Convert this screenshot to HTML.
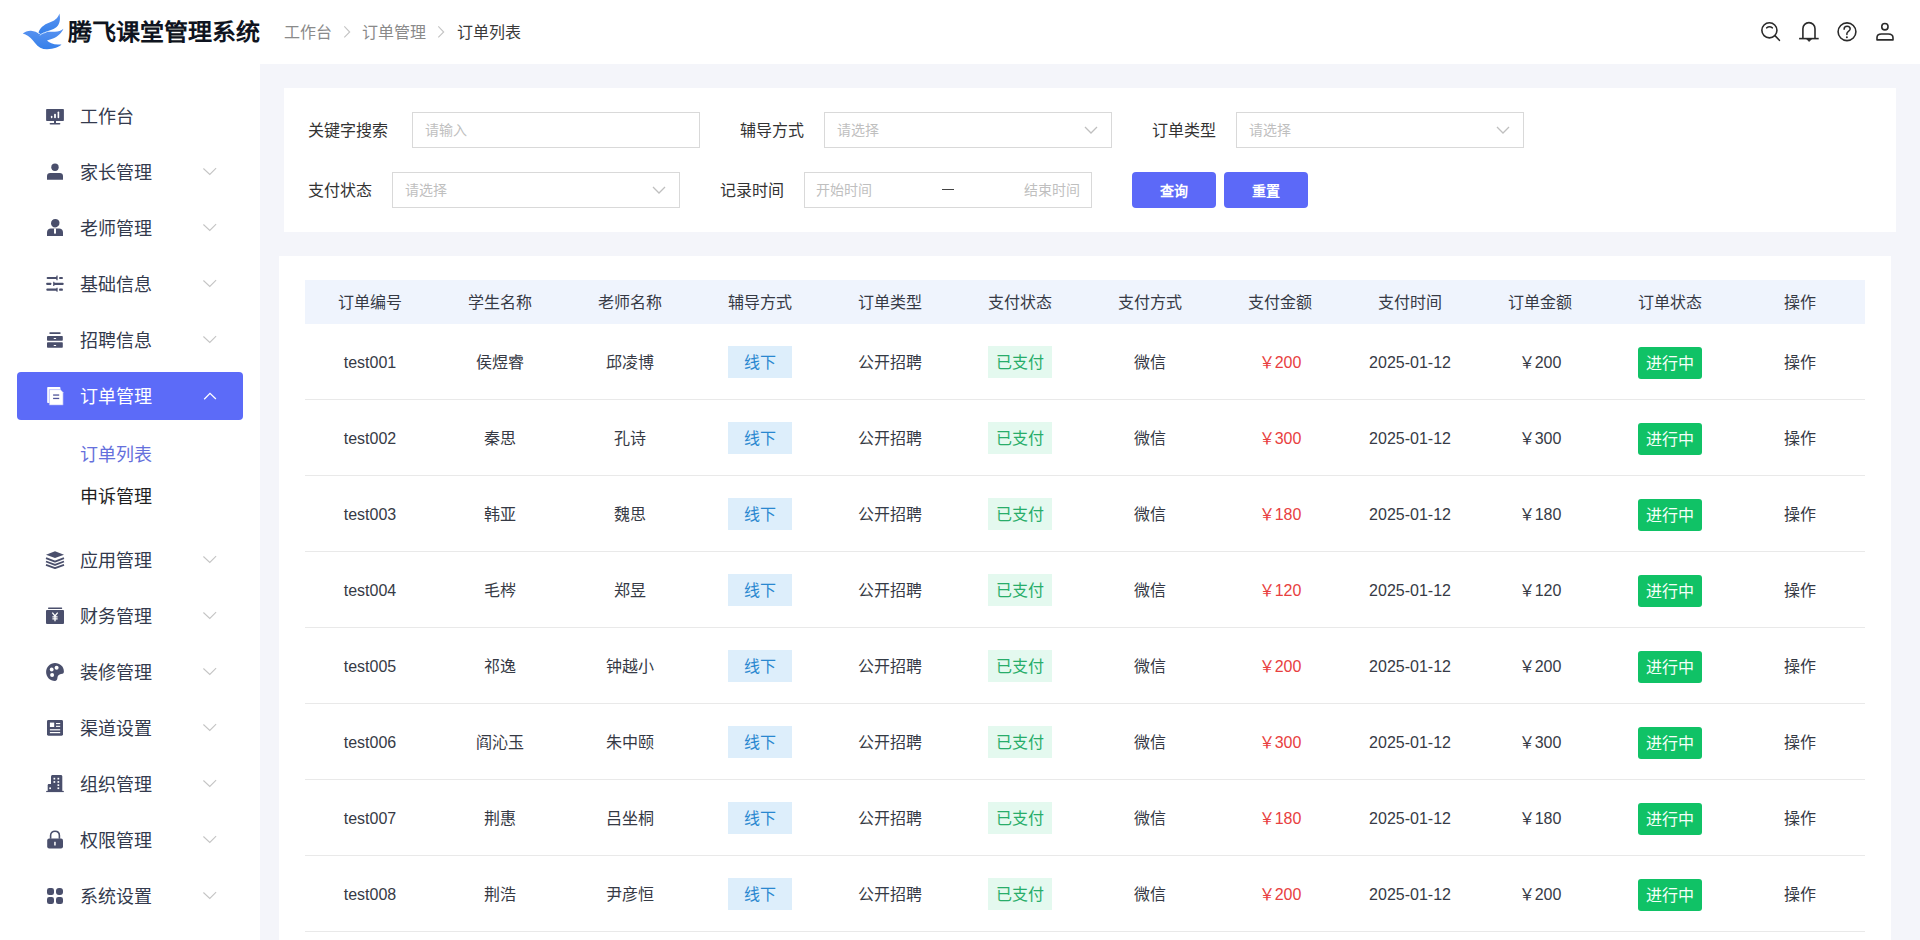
<!DOCTYPE html>
<html lang="zh-CN">
<head>
<meta charset="utf-8">
<style>
*{box-sizing:border-box;margin:0;padding:0}
html,body{width:1920px;height:940px;overflow:hidden;background:#f4f5fa;font-family:"Liberation Sans",sans-serif;color:#333}
.header{position:absolute;left:0;top:0;width:1920px;height:64px;background:#fff}
.title{position:absolute;left:68px;top:14px;font-size:24px;font-weight:900;color:#0f1420;line-height:36px;white-space:nowrap;transform:scaleY(0.94);transform-origin:0 27px}
.bc{position:absolute;top:21px;font-size:16px;line-height:24px;color:#8a8a8a;white-space:nowrap}
.bc .sep{display:inline-block;width:7px;margin:0 12px;position:relative;top:1px}
.bc.cur{color:#3a3a3a}
.side{position:absolute;left:0;top:64px;width:260px;height:876px;background:#fff}
.mi{position:absolute;left:17px;width:226px;height:48px;border-radius:4px;color:#333a4d;font-size:18px}
.mi .tx{position:absolute;left:63px;top:1px;line-height:48px;white-space:nowrap}
.mi.act{background:#5c6bf8;color:#fff}
.sub{position:absolute;left:80px;font-size:18px;line-height:24px;color:#1f1f1f;white-space:nowrap}
.sub.cur{color:#6570dc}
.card1{position:absolute;left:284px;top:88px;width:1612px;height:144px;background:#fff}
.lbl{position:absolute;font-size:16px;line-height:38px;color:#333;white-space:nowrap}
.inp{position:absolute;height:36px;border:1px solid #d9d9d9;background:#fff;font-size:14px;color:#bfbfbf;line-height:34px;padding-left:12px;white-space:nowrap}
.date .d1{position:absolute;left:11px}
.date .d2{position:absolute;right:11px}
.date .dash{position:absolute;left:137px;top:16px;width:12px;height:1px;background:#444}
.btn{position:absolute;top:172px;height:36px;width:84px;background:#5c69f8;color:#fff;border-radius:4px;font-size:14px;line-height:38px;text-align:center;font-weight:bold}
.card2{position:absolute;left:279px;top:256px;width:1612px;height:700px;background:#fff}
.thead{position:absolute;left:26px;top:24px;width:1560px;height:44px;background:#eff4fd}
.th{position:absolute;top:0;width:130px;height:44px;line-height:46px;text-align:center;font-size:16px;color:#363a45}
.tr{position:absolute;left:26px;width:1560px;height:76px;border-bottom:1px solid #e9e9e9}
.td{position:absolute;top:0;width:130px;height:75px;line-height:77px;text-align:center;font-size:16px;color:#363a45;white-space:nowrap}
.tag{display:inline-block;width:64px;height:32px;line-height:34px;font-size:16px;vertical-align:middle;position:relative;top:-2px}
.t1{background:#ddeefb;color:#2a88d0}
.t2{background:#e4f9ef;color:#28ad6a}
.t3{background:#10c266;color:#f4fff8;border-radius:3px;top:-1px;line-height:33px;font-weight:500}
.red{color:#e84040}

</style>
</head>
<body>
<div class="header">
<svg style="position:absolute;left:18px;top:10px" width="50" height="44" viewBox="0 0 50 44">
<defs><linearGradient id="lg" x1="0" y1="0" x2="0" y2="1"><stop offset="0" stop-color="#5a93f0"/><stop offset="1" stop-color="#3580ea"/></linearGradient></defs>
<path fill="url(#lg)" d="M4.7 23.6 C7 22 10 20.6 13 20.8 C16.5 21 19 22.5 21 24 C25 22 30 21.5 36 21.8 C40 22 43 20.5 45.4 18.7 C44 22.5 40 26.5 35 28.5 C33 29.3 31 30 29 30.4 C31 32.5 35 34.3 40 34.6 L43.5 34.6 C41 37 36 39.3 29 39.3 C24 39.3 20 37 17 33 C14.5 29.5 11 26 7.5 24.5 Z"/>
<path fill="url(#lg)" d="M20.5 22.5 C22 18 26 14.5 31 12.8 C36 11 40 8.5 41.4 3.5 C42.6 8.5 42.2 13.6 38.6 17.1 C35.2 20.2 28.5 21.2 22.5 24 Z"/>
<path fill="none" stroke="#cfe6ff" stroke-width="0.9" d="M21.8 25.2 C24 23.5 26.5 22.6 28.5 22.3"/>
</svg>
<div class="title">腾飞课堂管理系统</div>
<div class="bc" style="left:284px">工作台</div><div class="bc" style="left:362px">订单管理</div><div class="bc cur" style="left:457px">订单列表</div>
<svg style="position:absolute;left:343px;top:25px" width="9" height="14" viewBox="0 0 9 14"><path d="M1.3 1.4 L6.7 7 L1.3 12.4" fill="none" stroke="#c4c4c4" stroke-width="1.1"/></svg><svg style="position:absolute;left:437px;top:25px" width="9" height="14" viewBox="0 0 9 14"><path d="M1.3 1.4 L6.7 7 L1.3 12.4" fill="none" stroke="#c4c4c4" stroke-width="1.1"/></svg>
<svg style="position:absolute;left:1750px;top:14px" width="160" height="36" viewBox="1750 14 160 36" fill="none" stroke="#2b2b2b" stroke-width="1.6">
<circle cx="1769.4" cy="30.35" r="7.55"/>
<path d="M1775.2 35.9 L1779.4 40.3" stroke-linecap="round"/>
<path d="M1766.6 27.9 Q1769.5 25.6 1772.4 27.9" stroke-linecap="round" stroke-width="1.4"/>
<path d="M1802.9 38.5 L1802.9 28.7 A6.05 6.05 0 0 1 1815 28.7 L1815 38.5"/>
<path d="M1799.1 38.6 L1818.7 38.6"/>
<path d="M1806.6 38.8 L1809.1 41.4 L1811.6 38.8 Z" fill="#2b2b2b" stroke-width="1"/>
<circle cx="1847" cy="31.75" r="8.9"/>
<path d="M1844.1 29.3 C1844.1 27.3 1845.5 26.3 1847.1 26.3 C1848.8 26.3 1850.2 27.4 1850.2 29.1 C1850.2 30.9 1846.9 31.8 1846.9 33.4 L1846.9 34.6" stroke-linecap="round" stroke-width="1.5"/>
<circle cx="1846.9" cy="37.2" r="1" fill="#2b2b2b" stroke="none"/>
<circle cx="1884.9" cy="26.7" r="3.15"/>
<path d="M1877 39.9 L1877 37.6 C1877 35 1878.8 34 1881.5 34 L1888.3 34 C1891 34 1893 35.2 1893 37.8 L1893 39.9 Z" stroke-linejoin="round"/>
</svg>
</div>
<div class="side"></div>
<div class="mi" style="top:92px">
<svg style="position:absolute;left:23px;top:9px" width="30" height="30" viewBox="0 0 30 30"><rect x="6.1" y="8" width="17.8" height="12.1" rx="0.8" fill="#4a4f6c"/>
<rect x="14" y="19.5" width="2" height="3" fill="#4a4f6c"/><rect x="9.6" y="22" width="10.8" height="1.6" rx="0.8" fill="#4a4f6c"/>
<rect x="10.9" y="14.7" width="1.5" height="2.5" rx="0.7" fill="#fff"/><rect x="14.1" y="12.8" width="1.8" height="4.4" rx="0.8" fill="#fff"/><rect x="17.6" y="10.5" width="1.6" height="6.7" rx="0.8" fill="#fff"/></svg>
<span class="tx">工作台</span>
</div>
<div class="mi" style="top:148px">
<svg style="position:absolute;left:23px;top:9px" width="30" height="30" viewBox="0 0 30 30"><circle cx="15" cy="10.2" r="3.7" fill="#4a4f6c"/><path d="M7 22.8 L7 19.1 C7 17.2 8.2 16.1 10.2 16.1 L19.8 16.1 C21.8 16.1 23 17.2 23 19.1 L23 22.8 Z" fill="#4a4f6c"/></svg>
<span class="tx">家长管理</span>
<svg style="position:absolute;left:180px;top:9px" width="30" height="30" viewBox="195 0 30 30"><path d="M201.4 11.5 L207.8 17.4 L214.1 11.2" fill="none" stroke="#c4c4c4" stroke-width="1.1"/></svg>
</div>
<div class="mi" style="top:204px">
<svg style="position:absolute;left:23px;top:9px" width="30" height="30" viewBox="0 0 30 30"><path d="M11 10.5 C11 7.6 12.8 6 15.3 6 C17.8 6 19.5 7.3 19.5 9.8 C19.5 12.6 17.6 14.4 15.2 14.4 C12.8 14.4 11 12.9 11 10.5 Z" fill="#4a4f6c"/>
<path d="M7 23 L7 19.3 C7 17 8.6 15.6 11 15.6 L19 15.6 C21.4 15.6 23 17 23 19.3 L23 23 Z" fill="#4a4f6c"/>
<path d="M14 15.6 L16 15.6 L16 20 L15 21.3 L14 20 Z" fill="#fff"/></svg>
<span class="tx">老师管理</span>
<svg style="position:absolute;left:180px;top:9px" width="30" height="30" viewBox="195 0 30 30"><path d="M201.4 11.5 L207.8 17.4 L214.1 11.2" fill="none" stroke="#c4c4c4" stroke-width="1.1"/></svg>
</div>
<div class="mi" style="top:260px">
<svg style="position:absolute;left:23px;top:9px" width="30" height="30" viewBox="0 0 30 30"><g fill="#4a4f6c">
<rect x="6.6" y="7.9" width="10.5" height="2.2" rx="1"/><path d="M15.8 9 L16.6 6.6 L17.6 6.6 L17.6 11.3 L16.6 11.3 Z"/><rect x="19.2" y="7.9" width="3.6" height="2.2" rx="0.6"/>
<rect x="6.3" y="13.7" width="5" height="2.2" rx="0.6"/><path d="M13.2 12.7 L14.2 12.7 L15 14.8 L14.2 17 L13.2 17 Z"/><rect x="13.7" y="13.7" width="10" height="2.2" rx="1"/>
<rect x="6.3" y="19.6" width="10.8" height="2.2" rx="1"/><path d="M15.8 20.7 L16.6 18.7 L17.6 18.7 L17.6 22.8 L16.6 22.8 Z"/><rect x="19.2" y="19.6" width="3.6" height="2.2" rx="0.6"/>
</g></svg>
<span class="tx">基础信息</span>
<svg style="position:absolute;left:180px;top:9px" width="30" height="30" viewBox="195 0 30 30"><path d="M201.4 11.5 L207.8 17.4 L214.1 11.2" fill="none" stroke="#c4c4c4" stroke-width="1.1"/></svg>
</div>
<div class="mi" style="top:316px">
<svg style="position:absolute;left:23px;top:9px" width="30" height="30" viewBox="0 0 30 30"><rect x="9.3" y="7.2" width="11.4" height="1.7" rx="0.85" fill="#4a4f6c"/>
<rect x="7" y="10.9" width="15.8" height="4.9" rx="0.8" fill="#4a4f6c"/>
<rect x="7" y="17.3" width="15.8" height="5.5" rx="0.8" fill="#4a4f6c"/>
<rect x="13.6" y="13" width="2.6" height="1.1" rx="0.5" fill="#fff"/><rect x="13.6" y="19.9" width="2.6" height="1.1" rx="0.5" fill="#fff"/></svg>
<span class="tx">招聘信息</span>
<svg style="position:absolute;left:180px;top:9px" width="30" height="30" viewBox="195 0 30 30"><path d="M201.4 11.5 L207.8 17.4 L214.1 11.2" fill="none" stroke="#c4c4c4" stroke-width="1.1"/></svg>
</div>
<div class="mi act" style="top:372px">
<svg style="position:absolute;left:23px;top:9px" width="30" height="30" viewBox="0 0 30 30"><rect x="7.2" y="5.9" width="13.2" height="16.2" rx="0.8" fill="#fff"/>
<path d="M9.3 8.6 L20.4 8.6 L23.1 11.3 L23.1 24.1 L9.3 24.1 Z" fill="#fff" stroke="#9aa3f6" stroke-width="0.6"/>
<rect x="13.1" y="13.4" width="6.1" height="1.3" fill="#50559a"/><rect x="13.1" y="16.8" width="6.1" height="1.3" fill="#50559a"/></svg>
<span class="tx">订单管理</span>
<svg style="position:absolute;left:180px;top:9px" width="30" height="30" viewBox="195 0 30 30"><path d="M202.2 18.2 L208 12.4 L213.9 18" fill="none" stroke="#fff" stroke-width="1.3"/></svg>
</div>
<div class="mi" style="top:536px">
<svg style="position:absolute;left:23px;top:9px" width="30" height="30" viewBox="0 0 30 30"><path d="M15 6.2 L24 9.7 L15 13.1 L6 9.7 Z" fill="#4a4f6c"/>
<path d="M6 13.2 L15 16.6 L24 13.2 M6 16.5 L15 19.9 L24 16.5 M6 19.8 L15 23.2 L24 19.8" fill="none" stroke="#4a4f6c" stroke-width="1.8" stroke-linejoin="round"/></svg>
<span class="tx">应用管理</span>
<svg style="position:absolute;left:180px;top:9px" width="30" height="30" viewBox="195 0 30 30"><path d="M201.4 11.5 L207.8 17.4 L214.1 11.2" fill="none" stroke="#c4c4c4" stroke-width="1.1"/></svg>
</div>
<div class="mi" style="top:592px">
<svg style="position:absolute;left:23px;top:9px" width="30" height="30" viewBox="0 0 30 30"><rect x="8" y="6.6" width="14.2" height="1.3" rx="0.6" fill="#4a4f6c"/>
<rect x="6" y="8.9" width="18" height="14.1" rx="1" fill="#4a4f6c"/>
<path d="M12.3 11.7 L15 14.9 L17.7 11.7 M12.4 15.9 L17.6 15.9 M12.4 17.8 L17.6 17.8 M15 14.9 L15 20.3" fill="none" stroke="#fff" stroke-width="1.3"/></svg>
<span class="tx">财务管理</span>
<svg style="position:absolute;left:180px;top:9px" width="30" height="30" viewBox="195 0 30 30"><path d="M201.4 11.5 L207.8 17.4 L214.1 11.2" fill="none" stroke="#c4c4c4" stroke-width="1.1"/></svg>
</div>
<div class="mi" style="top:648px">
<svg style="position:absolute;left:23px;top:9px" width="30" height="30" viewBox="0 0 30 30"><path d="M15 6 C20 6 23.9 9.6 23.9 14.3 C23.9 15.6 23.4 16.5 22.4 16.8 C20.6 17.3 18.4 17.6 17.7 19.6 C17.2 21.2 17.8 23.6 15 24 C10.1 24 6.1 20 6.1 15 C6.1 10 10.1 6 15 6 Z" fill="#4a4f6c"/>
<circle cx="11.7" cy="12.5" r="1.9" fill="#fff"/><circle cx="16.6" cy="10.8" r="2" fill="#fff"/><circle cx="12.1" cy="18" r="2" fill="#fff"/></svg>
<span class="tx">装修管理</span>
<svg style="position:absolute;left:180px;top:9px" width="30" height="30" viewBox="195 0 30 30"><path d="M201.4 11.5 L207.8 17.4 L214.1 11.2" fill="none" stroke="#c4c4c4" stroke-width="1.1"/></svg>
</div>
<div class="mi" style="top:704px">
<svg style="position:absolute;left:23px;top:9px" width="30" height="30" viewBox="0 0 30 30"><rect x="7" y="6.9" width="16" height="15.8" rx="1.4" fill="#4a4f6c"/>
<rect x="9.9" y="9.6" width="4.3" height="4.4" fill="#fff"/><rect x="16" y="10" width="4.2" height="1.1" fill="#fff"/><rect x="16" y="12.8" width="4.2" height="1.1" fill="#fff"/>
<rect x="9.9" y="16.2" width="10.3" height="1.2" fill="#fff"/><rect x="9.9" y="19" width="10.3" height="1.2" fill="#fff"/></svg>
<span class="tx">渠道设置</span>
<svg style="position:absolute;left:180px;top:9px" width="30" height="30" viewBox="195 0 30 30"><path d="M201.4 11.5 L207.8 17.4 L214.1 11.2" fill="none" stroke="#c4c4c4" stroke-width="1.1"/></svg>
</div>
<div class="mi" style="top:760px">
<svg style="position:absolute;left:23px;top:9px" width="30" height="30" viewBox="0 0 30 30"><path d="M11 22 L11 7.4 C11 6.5 11.7 5.9 12.6 5.9 L20.8 5.9 C21.7 5.9 22.3 6.5 22.3 7.4 L22.3 22 Z" fill="#4a4f6c"/>
<path d="M7.7 22 L7.7 16.2 C7.7 15.5 8.2 15 8.9 15 L14 15 L14 22 Z" fill="#4a4f6c"/>
<rect x="6.2" y="21.9" width="17.6" height="1.2" fill="#4a4f6c"/>
<g fill="#fff"><rect x="13.5" y="8.8" width="1.7" height="1.7"/><rect x="17.5" y="8.8" width="1.7" height="1.7"/><rect x="13.5" y="12.1" width="1.7" height="1.7"/><rect x="17.5" y="12.1" width="1.7" height="1.7"/><rect x="17.5" y="15.3" width="1.7" height="1.7"/><rect x="17.5" y="18.4" width="1.7" height="1.7"/><rect x="9.3" y="18.4" width="1.7" height="1.7"/></g></svg>
<span class="tx">组织管理</span>
<svg style="position:absolute;left:180px;top:9px" width="30" height="30" viewBox="195 0 30 30"><path d="M201.4 11.5 L207.8 17.4 L214.1 11.2" fill="none" stroke="#c4c4c4" stroke-width="1.1"/></svg>
</div>
<div class="mi" style="top:816px">
<svg style="position:absolute;left:23px;top:9px" width="30" height="30" viewBox="0 0 30 30"><path d="M10.6 13.8 L10.6 10.6 C10.6 7.9 12.5 6.3 15 6.3 C17.5 6.3 19.4 7.9 19.4 10.6 L19.4 13.8" fill="none" stroke="#4a4f6c" stroke-width="1.6"/>
<rect x="7.2" y="13.4" width="15.8" height="10.2" rx="2" fill="#4a4f6c"/><rect x="14.2" y="16.8" width="1.5" height="3.8" rx="0.3" fill="#fff"/></svg>
<span class="tx">权限管理</span>
<svg style="position:absolute;left:180px;top:9px" width="30" height="30" viewBox="195 0 30 30"><path d="M201.4 11.5 L207.8 17.4 L214.1 11.2" fill="none" stroke="#c4c4c4" stroke-width="1.1"/></svg>
</div>
<div class="mi" style="top:872px">
<svg style="position:absolute;left:23px;top:9px" width="30" height="30" viewBox="0 0 30 30"><g fill="#4a4f6c"><rect x="7" y="6.9" width="7" height="7.1" rx="2.3"/><rect x="16" y="6.9" width="7" height="7.1" rx="3"/><rect x="7" y="16" width="7" height="7" rx="2.3"/><rect x="16" y="16" width="7" height="7" rx="2.3"/></g></svg>
<span class="tx">系统设置</span>
<svg style="position:absolute;left:180px;top:9px" width="30" height="30" viewBox="195 0 30 30"><path d="M201.4 11.5 L207.8 17.4 L214.1 11.2" fill="none" stroke="#c4c4c4" stroke-width="1.1"/></svg>
</div>
<div class="sub cur" style="top:443px">订单列表</div>
<div class="sub" style="top:485px">申诉管理</div>
<div class="card1"></div>
<div class="lbl" style="left:308px;top:112px">关键字搜索</div>
<div class="inp" style="left:412px;top:112px;width:288px">请输入</div>
<div class="lbl" style="left:740px;top:112px">辅导方式</div>
<div class="inp" style="left:824px;top:112px;width:288px">请选择<svg style="position:absolute;right:13px;top:13px" width="14" height="9" viewBox="0 0 14 9"><path d="M1 1 L7 7 L13 1" fill="none" stroke="#bfbfbf" stroke-width="1.3"/></svg></div>
<div class="lbl" style="left:1152px;top:112px">订单类型</div>
<div class="inp" style="left:1236px;top:112px;width:288px">请选择<svg style="position:absolute;right:13px;top:13px" width="14" height="9" viewBox="0 0 14 9"><path d="M1 1 L7 7 L13 1" fill="none" stroke="#bfbfbf" stroke-width="1.3"/></svg></div>
<div class="lbl" style="left:308px;top:172px">支付状态</div>
<div class="inp" style="left:392px;top:172px;width:288px">请选择<svg style="position:absolute;right:13px;top:13px" width="14" height="9" viewBox="0 0 14 9"><path d="M1 1 L7 7 L13 1" fill="none" stroke="#bfbfbf" stroke-width="1.3"/></svg></div>
<div class="lbl" style="left:720px;top:172px">记录时间</div>
<div class="inp date" style="left:804px;top:172px;width:288px"><span class="d1">开始时间</span><span class="dash"></span><span class="d2">结束时间</span></div>
<div class="btn" style="left:1132px">查询</div>
<div class="btn" style="left:1224px">重置</div>
<div class="card2">
<div class="thead"><div class="th" style="left:0px">订单编号</div><div class="th" style="left:130px">学生名称</div><div class="th" style="left:260px">老师名称</div><div class="th" style="left:390px">辅导方式</div><div class="th" style="left:520px">订单类型</div><div class="th" style="left:650px">支付状态</div><div class="th" style="left:780px">支付方式</div><div class="th" style="left:910px">支付金额</div><div class="th" style="left:1040px">支付时间</div><div class="th" style="left:1170px">订单金额</div><div class="th" style="left:1300px">订单状态</div><div class="th" style="left:1430px">操作</div></div>
<div class="tr" style="top:68px"><div class="td" style="left:0px">test001</div><div class="td" style="left:130px">侯煜睿</div><div class="td" style="left:260px">邱凌博</div><div class="td" style="left:390px"><span class="tag t1">线下</span></div><div class="td" style="left:520px">公开招聘</div><div class="td" style="left:650px"><span class="tag t2">已支付</span></div><div class="td" style="left:780px">微信</div><div class="td" style="left:910px"><span class="red">￥200</span></div><div class="td" style="left:1040px">2025-01-12</div><div class="td" style="left:1170px">￥200</div><div class="td" style="left:1300px"><span class="tag t3">进行中</span></div><div class="td" style="left:1430px">操作</div></div>
<div class="tr" style="top:144px"><div class="td" style="left:0px">test002</div><div class="td" style="left:130px">秦思</div><div class="td" style="left:260px">孔诗</div><div class="td" style="left:390px"><span class="tag t1">线下</span></div><div class="td" style="left:520px">公开招聘</div><div class="td" style="left:650px"><span class="tag t2">已支付</span></div><div class="td" style="left:780px">微信</div><div class="td" style="left:910px"><span class="red">￥300</span></div><div class="td" style="left:1040px">2025-01-12</div><div class="td" style="left:1170px">￥300</div><div class="td" style="left:1300px"><span class="tag t3">进行中</span></div><div class="td" style="left:1430px">操作</div></div>
<div class="tr" style="top:220px"><div class="td" style="left:0px">test003</div><div class="td" style="left:130px">韩亚</div><div class="td" style="left:260px">魏思</div><div class="td" style="left:390px"><span class="tag t1">线下</span></div><div class="td" style="left:520px">公开招聘</div><div class="td" style="left:650px"><span class="tag t2">已支付</span></div><div class="td" style="left:780px">微信</div><div class="td" style="left:910px"><span class="red">￥180</span></div><div class="td" style="left:1040px">2025-01-12</div><div class="td" style="left:1170px">￥180</div><div class="td" style="left:1300px"><span class="tag t3">进行中</span></div><div class="td" style="left:1430px">操作</div></div>
<div class="tr" style="top:296px"><div class="td" style="left:0px">test004</div><div class="td" style="left:130px">毛梣</div><div class="td" style="left:260px">郑昱</div><div class="td" style="left:390px"><span class="tag t1">线下</span></div><div class="td" style="left:520px">公开招聘</div><div class="td" style="left:650px"><span class="tag t2">已支付</span></div><div class="td" style="left:780px">微信</div><div class="td" style="left:910px"><span class="red">￥120</span></div><div class="td" style="left:1040px">2025-01-12</div><div class="td" style="left:1170px">￥120</div><div class="td" style="left:1300px"><span class="tag t3">进行中</span></div><div class="td" style="left:1430px">操作</div></div>
<div class="tr" style="top:372px"><div class="td" style="left:0px">test005</div><div class="td" style="left:130px">祁逸</div><div class="td" style="left:260px">钟越小</div><div class="td" style="left:390px"><span class="tag t1">线下</span></div><div class="td" style="left:520px">公开招聘</div><div class="td" style="left:650px"><span class="tag t2">已支付</span></div><div class="td" style="left:780px">微信</div><div class="td" style="left:910px"><span class="red">￥200</span></div><div class="td" style="left:1040px">2025-01-12</div><div class="td" style="left:1170px">￥200</div><div class="td" style="left:1300px"><span class="tag t3">进行中</span></div><div class="td" style="left:1430px">操作</div></div>
<div class="tr" style="top:448px"><div class="td" style="left:0px">test006</div><div class="td" style="left:130px">阎沁玉</div><div class="td" style="left:260px">朱中颐</div><div class="td" style="left:390px"><span class="tag t1">线下</span></div><div class="td" style="left:520px">公开招聘</div><div class="td" style="left:650px"><span class="tag t2">已支付</span></div><div class="td" style="left:780px">微信</div><div class="td" style="left:910px"><span class="red">￥300</span></div><div class="td" style="left:1040px">2025-01-12</div><div class="td" style="left:1170px">￥300</div><div class="td" style="left:1300px"><span class="tag t3">进行中</span></div><div class="td" style="left:1430px">操作</div></div>
<div class="tr" style="top:524px"><div class="td" style="left:0px">test007</div><div class="td" style="left:130px">荆惠</div><div class="td" style="left:260px">吕坐桐</div><div class="td" style="left:390px"><span class="tag t1">线下</span></div><div class="td" style="left:520px">公开招聘</div><div class="td" style="left:650px"><span class="tag t2">已支付</span></div><div class="td" style="left:780px">微信</div><div class="td" style="left:910px"><span class="red">￥180</span></div><div class="td" style="left:1040px">2025-01-12</div><div class="td" style="left:1170px">￥180</div><div class="td" style="left:1300px"><span class="tag t3">进行中</span></div><div class="td" style="left:1430px">操作</div></div>
<div class="tr" style="top:600px"><div class="td" style="left:0px">test008</div><div class="td" style="left:130px">荆浩</div><div class="td" style="left:260px">尹彦恒</div><div class="td" style="left:390px"><span class="tag t1">线下</span></div><div class="td" style="left:520px">公开招聘</div><div class="td" style="left:650px"><span class="tag t2">已支付</span></div><div class="td" style="left:780px">微信</div><div class="td" style="left:910px"><span class="red">￥200</span></div><div class="td" style="left:1040px">2025-01-12</div><div class="td" style="left:1170px">￥200</div><div class="td" style="left:1300px"><span class="tag t3">进行中</span></div><div class="td" style="left:1430px">操作</div></div>
</div>
</body>
</html>
